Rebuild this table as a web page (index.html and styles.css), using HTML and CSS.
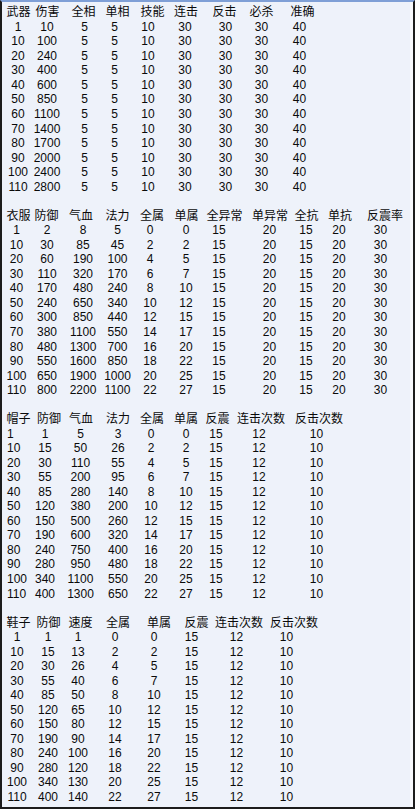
FILE: index.html
```html
<!DOCTYPE html>
<html lang="zh">
<head>
<meta charset="utf-8">
<link rel="stylesheet" href="styles.css">
</head>
<body>
<div class="frame">
  <section class="tbl t1">
    <div class="head"><span class="c">武器</span><span class="c">伤害</span><span class="c">全相</span><span class="c">单相</span><span class="c">技能</span><span class="c">连击</span><span class="c">反击</span><span class="c">必杀</span><span class="c">准确</span></div>
    <div class="body">
      <span class="c">1</span><span class="c">10</span><span class="c">5</span><span class="c">5</span><span class="c">10</span><span class="c">30</span><span class="c">30</span><span class="c">30</span><span class="c">40</span>
      <span class="c">10</span><span class="c">100</span><span class="c">5</span><span class="c">5</span><span class="c">10</span><span class="c">30</span><span class="c">30</span><span class="c">30</span><span class="c">40</span>
      <span class="c">20</span><span class="c">240</span><span class="c">5</span><span class="c">5</span><span class="c">10</span><span class="c">30</span><span class="c">30</span><span class="c">30</span><span class="c">40</span>
      <span class="c">30</span><span class="c">400</span><span class="c">5</span><span class="c">5</span><span class="c">10</span><span class="c">30</span><span class="c">30</span><span class="c">30</span><span class="c">40</span>
      <span class="c">40</span><span class="c">600</span><span class="c">5</span><span class="c">5</span><span class="c">10</span><span class="c">30</span><span class="c">30</span><span class="c">30</span><span class="c">40</span>
      <span class="c">50</span><span class="c">850</span><span class="c">5</span><span class="c">5</span><span class="c">10</span><span class="c">30</span><span class="c">30</span><span class="c">30</span><span class="c">40</span>
      <span class="c">60</span><span class="c">1100</span><span class="c">5</span><span class="c">5</span><span class="c">10</span><span class="c">30</span><span class="c">30</span><span class="c">30</span><span class="c">40</span>
      <span class="c">70</span><span class="c">1400</span><span class="c">5</span><span class="c">5</span><span class="c">10</span><span class="c">30</span><span class="c">30</span><span class="c">30</span><span class="c">40</span>
      <span class="c">80</span><span class="c">1700</span><span class="c">5</span><span class="c">5</span><span class="c">10</span><span class="c">30</span><span class="c">30</span><span class="c">30</span><span class="c">40</span>
      <span class="c">90</span><span class="c">2000</span><span class="c">5</span><span class="c">5</span><span class="c">10</span><span class="c">30</span><span class="c">30</span><span class="c">30</span><span class="c">40</span>
      <span class="c">100</span><span class="c">2400</span><span class="c">5</span><span class="c">5</span><span class="c">10</span><span class="c">30</span><span class="c">30</span><span class="c">30</span><span class="c">40</span>
      <span class="c">110</span><span class="c">2800</span><span class="c">5</span><span class="c">5</span><span class="c">10</span><span class="c">30</span><span class="c">30</span><span class="c">30</span><span class="c">40</span>
    </div>
  </section>

  <section class="tbl t2">
    <div class="head"><span class="c">衣服</span><span class="c">防御</span><span class="c">气血</span><span class="c">法力</span><span class="c">全属</span><span class="c">单属</span><span class="c">全异常</span><span class="c">单异常</span><span class="c">全抗</span><span class="c">单抗</span><span class="c">反震率</span></div>
    <div class="body">
      <span class="c">1</span><span class="c">2</span><span class="c">8</span><span class="c">5</span><span class="c">0</span><span class="c">0</span><span class="c">15</span><span class="c">20</span><span class="c">15</span><span class="c">20</span><span class="c">30</span>
      <span class="c">10</span><span class="c">30</span><span class="c">85</span><span class="c">45</span><span class="c">2</span><span class="c">2</span><span class="c">15</span><span class="c">20</span><span class="c">15</span><span class="c">20</span><span class="c">30</span>
      <span class="c">20</span><span class="c">60</span><span class="c">190</span><span class="c">100</span><span class="c">4</span><span class="c">5</span><span class="c">15</span><span class="c">20</span><span class="c">15</span><span class="c">20</span><span class="c">30</span>
      <span class="c">30</span><span class="c">110</span><span class="c">320</span><span class="c">170</span><span class="c">6</span><span class="c">7</span><span class="c">15</span><span class="c">20</span><span class="c">15</span><span class="c">20</span><span class="c">30</span>
      <span class="c">40</span><span class="c">170</span><span class="c">480</span><span class="c">240</span><span class="c">8</span><span class="c">10</span><span class="c">15</span><span class="c">20</span><span class="c">15</span><span class="c">20</span><span class="c">30</span>
      <span class="c">50</span><span class="c">240</span><span class="c">650</span><span class="c">340</span><span class="c">10</span><span class="c">12</span><span class="c">15</span><span class="c">20</span><span class="c">15</span><span class="c">20</span><span class="c">30</span>
      <span class="c">60</span><span class="c">300</span><span class="c">850</span><span class="c">440</span><span class="c">12</span><span class="c">15</span><span class="c">15</span><span class="c">20</span><span class="c">15</span><span class="c">20</span><span class="c">30</span>
      <span class="c">70</span><span class="c">380</span><span class="c">1100</span><span class="c">550</span><span class="c">14</span><span class="c">17</span><span class="c">15</span><span class="c">20</span><span class="c">15</span><span class="c">20</span><span class="c">30</span>
      <span class="c">80</span><span class="c">480</span><span class="c">1300</span><span class="c">700</span><span class="c">16</span><span class="c">20</span><span class="c">15</span><span class="c">20</span><span class="c">15</span><span class="c">20</span><span class="c">30</span>
      <span class="c">90</span><span class="c">550</span><span class="c">1600</span><span class="c">850</span><span class="c">18</span><span class="c">22</span><span class="c">15</span><span class="c">20</span><span class="c">15</span><span class="c">20</span><span class="c">30</span>
      <span class="c">100</span><span class="c">650</span><span class="c">1900</span><span class="c">1000</span><span class="c">20</span><span class="c">25</span><span class="c">15</span><span class="c">20</span><span class="c">15</span><span class="c">20</span><span class="c">30</span>
      <span class="c">110</span><span class="c">800</span><span class="c">2200</span><span class="c">1100</span><span class="c">22</span><span class="c">27</span><span class="c">15</span><span class="c">20</span><span class="c">15</span><span class="c">20</span><span class="c">30</span>
    </div>
  </section>

  <section class="tbl t3">
    <div class="head"><span class="c">帽子</span><span class="c">防御</span><span class="c">气血</span><span class="c">法力</span><span class="c">全属</span><span class="c">单属</span><span class="c">反震</span><span class="c">连击次数</span><span class="c">反击次数</span></div>
    <div class="body">
      <span class="c l">1</span><span class="c">1</span><span class="c">5</span><span class="c">3</span><span class="c">0</span><span class="c">0</span><span class="c">15</span><span class="c">12</span><span class="c">10</span>
      <span class="c l">10</span><span class="c">15</span><span class="c">50</span><span class="c">26</span><span class="c">2</span><span class="c">2</span><span class="c">15</span><span class="c">12</span><span class="c">10</span>
      <span class="c l">20</span><span class="c">30</span><span class="c">110</span><span class="c">55</span><span class="c">4</span><span class="c">5</span><span class="c">15</span><span class="c">12</span><span class="c">10</span>
      <span class="c l">30</span><span class="c">55</span><span class="c">200</span><span class="c">95</span><span class="c">6</span><span class="c">7</span><span class="c">15</span><span class="c">12</span><span class="c">10</span>
      <span class="c l">40</span><span class="c">85</span><span class="c">280</span><span class="c">140</span><span class="c">8</span><span class="c">10</span><span class="c">15</span><span class="c">12</span><span class="c">10</span>
      <span class="c l">50</span><span class="c">120</span><span class="c">380</span><span class="c">200</span><span class="c">10</span><span class="c">12</span><span class="c">15</span><span class="c">12</span><span class="c">10</span>
      <span class="c l">60</span><span class="c">150</span><span class="c">500</span><span class="c">260</span><span class="c">12</span><span class="c">15</span><span class="c">15</span><span class="c">12</span><span class="c">10</span>
      <span class="c l">70</span><span class="c">190</span><span class="c">600</span><span class="c">320</span><span class="c">14</span><span class="c">17</span><span class="c">15</span><span class="c">12</span><span class="c">10</span>
      <span class="c l">80</span><span class="c">240</span><span class="c">750</span><span class="c">400</span><span class="c">16</span><span class="c">20</span><span class="c">15</span><span class="c">12</span><span class="c">10</span>
      <span class="c l">90</span><span class="c">280</span><span class="c">950</span><span class="c">480</span><span class="c">18</span><span class="c">22</span><span class="c">15</span><span class="c">12</span><span class="c">10</span>
      <span class="c l">100</span><span class="c">340</span><span class="c">1100</span><span class="c">550</span><span class="c">20</span><span class="c">25</span><span class="c">15</span><span class="c">12</span><span class="c">10</span>
      <span class="c l">110</span><span class="c">400</span><span class="c">1300</span><span class="c">650</span><span class="c">22</span><span class="c">27</span><span class="c">15</span><span class="c">12</span><span class="c">10</span>
    </div>
  </section>

  <section class="tbl t4">
    <div class="head"><span class="c">鞋子</span><span class="c">防御</span><span class="c">速度</span><span class="c">全属</span><span class="c">单属</span><span class="c">反震</span><span class="c">连击次数</span><span class="c">反击次数</span></div>
    <div class="body">
      <span class="c">1</span><span class="c">1</span><span class="c">1</span><span class="c">0</span><span class="c">0</span><span class="c">15</span><span class="c">12</span><span class="c">10</span>
      <span class="c">10</span><span class="c">15</span><span class="c">13</span><span class="c">2</span><span class="c">2</span><span class="c">15</span><span class="c">12</span><span class="c">10</span>
      <span class="c">20</span><span class="c">30</span><span class="c">26</span><span class="c">4</span><span class="c">5</span><span class="c">15</span><span class="c">12</span><span class="c">10</span>
      <span class="c">30</span><span class="c">55</span><span class="c">40</span><span class="c">6</span><span class="c">7</span><span class="c">15</span><span class="c">12</span><span class="c">10</span>
      <span class="c">40</span><span class="c">85</span><span class="c">50</span><span class="c">8</span><span class="c">10</span><span class="c">15</span><span class="c">12</span><span class="c">10</span>
      <span class="c">50</span><span class="c">120</span><span class="c">65</span><span class="c">10</span><span class="c">12</span><span class="c">15</span><span class="c">12</span><span class="c">10</span>
      <span class="c">60</span><span class="c">150</span><span class="c">80</span><span class="c">12</span><span class="c">15</span><span class="c">15</span><span class="c">12</span><span class="c">10</span>
      <span class="c">70</span><span class="c">190</span><span class="c">90</span><span class="c">14</span><span class="c">17</span><span class="c">15</span><span class="c">12</span><span class="c">10</span>
      <span class="c">80</span><span class="c">240</span><span class="c">100</span><span class="c">16</span><span class="c">20</span><span class="c">15</span><span class="c">12</span><span class="c">10</span>
      <span class="c">90</span><span class="c">280</span><span class="c">120</span><span class="c">18</span><span class="c">22</span><span class="c">15</span><span class="c">12</span><span class="c">10</span>
      <span class="c">100</span><span class="c">340</span><span class="c">130</span><span class="c">20</span><span class="c">25</span><span class="c">15</span><span class="c">12</span><span class="c">10</span>
      <span class="c">110</span><span class="c">400</span><span class="c">140</span><span class="c">22</span><span class="c">27</span><span class="c">15</span><span class="c">12</span><span class="c">10</span>
    </div>
  </section>
</div>
</body>
</html>
```

FILE: styles.css
```css
html, body {
  margin: 0;
  padding: 0;
  background: #ffffff;
}

.frame {
  box-sizing: border-box;
  width: 415px;
  height: 809px;
  background: #eef2fa;
  border-left: 2px solid #1c1c1c;
  border-right: 2px solid #1c1c1c;
  border-bottom: 2px solid #1c1c1c;
  border-top: 2px solid #7f9fd6;
  box-shadow: inset -3px 0 0 #f7f8fc;
  padding-top: 3.3px;
  display: flex;
  flex-direction: column;
  gap: 14.53px;
  font-family: "Liberation Sans", "Noto Sans CJK SC", sans-serif;
  font-size: 12px;
  line-height: 14.53px;
  color: #0a0a0a;
}

.tbl {
  display: flex;
  flex-direction: column;
}

.head,
.body {
  display: grid;
}

.c {
  width: 0;
  display: flex;
  justify-content: center;
  white-space: nowrap;
}

.c.l {
  justify-content: flex-start;
}

/* table 1: weapon */
.t1 .head {
  padding-left: 16.5px;
  grid-template-columns: 29px 36px 34px 35px 33.5px 38.5px 37px 41px 40px;
}
.t1 .body {
  padding-left: 16px;
  grid-template-columns: 29px 37.5px 30px 33.5px 37px 40.5px 36px 38px 40px;
}

/* table 2: clothes */
.t2 .head {
  padding-left: 16.5px;
  grid-template-columns: 28px 34.5px 36.5px 34.5px 34.5px 38px 45.5px 36.5px 33.5px 45px 40px;
}
.t2 .body {
  padding-left: 14.5px;
  grid-template-columns: 30.5px 36px 34.5px 32.5px 36px 33px 50.5px 36.5px 33px 41.5px 30px;
}

/* table 3: hat */
.t3 .head {
  padding-left: 16.5px;
  grid-template-columns: 30.5px 32px 37px 34px 34px 31.5px 43.5px 58px 50px;
}
.t3 .body {
  padding-left: 5px;
  grid-template-columns: 38px 35.5px 37.5px 33px 35px 30px 43px 57.5px 40px;
}

/* table 4: shoes */
.t4 .head {
  padding-left: 16.5px;
  grid-template-columns: 30px 32px 37.5px 41px 37.5px 42.5px 55px 50px;
}
.t4 .body {
  padding-left: 15px;
  grid-template-columns: 31px 30px 37px 39px 37.5px 45px 50px 40px;
}
```
